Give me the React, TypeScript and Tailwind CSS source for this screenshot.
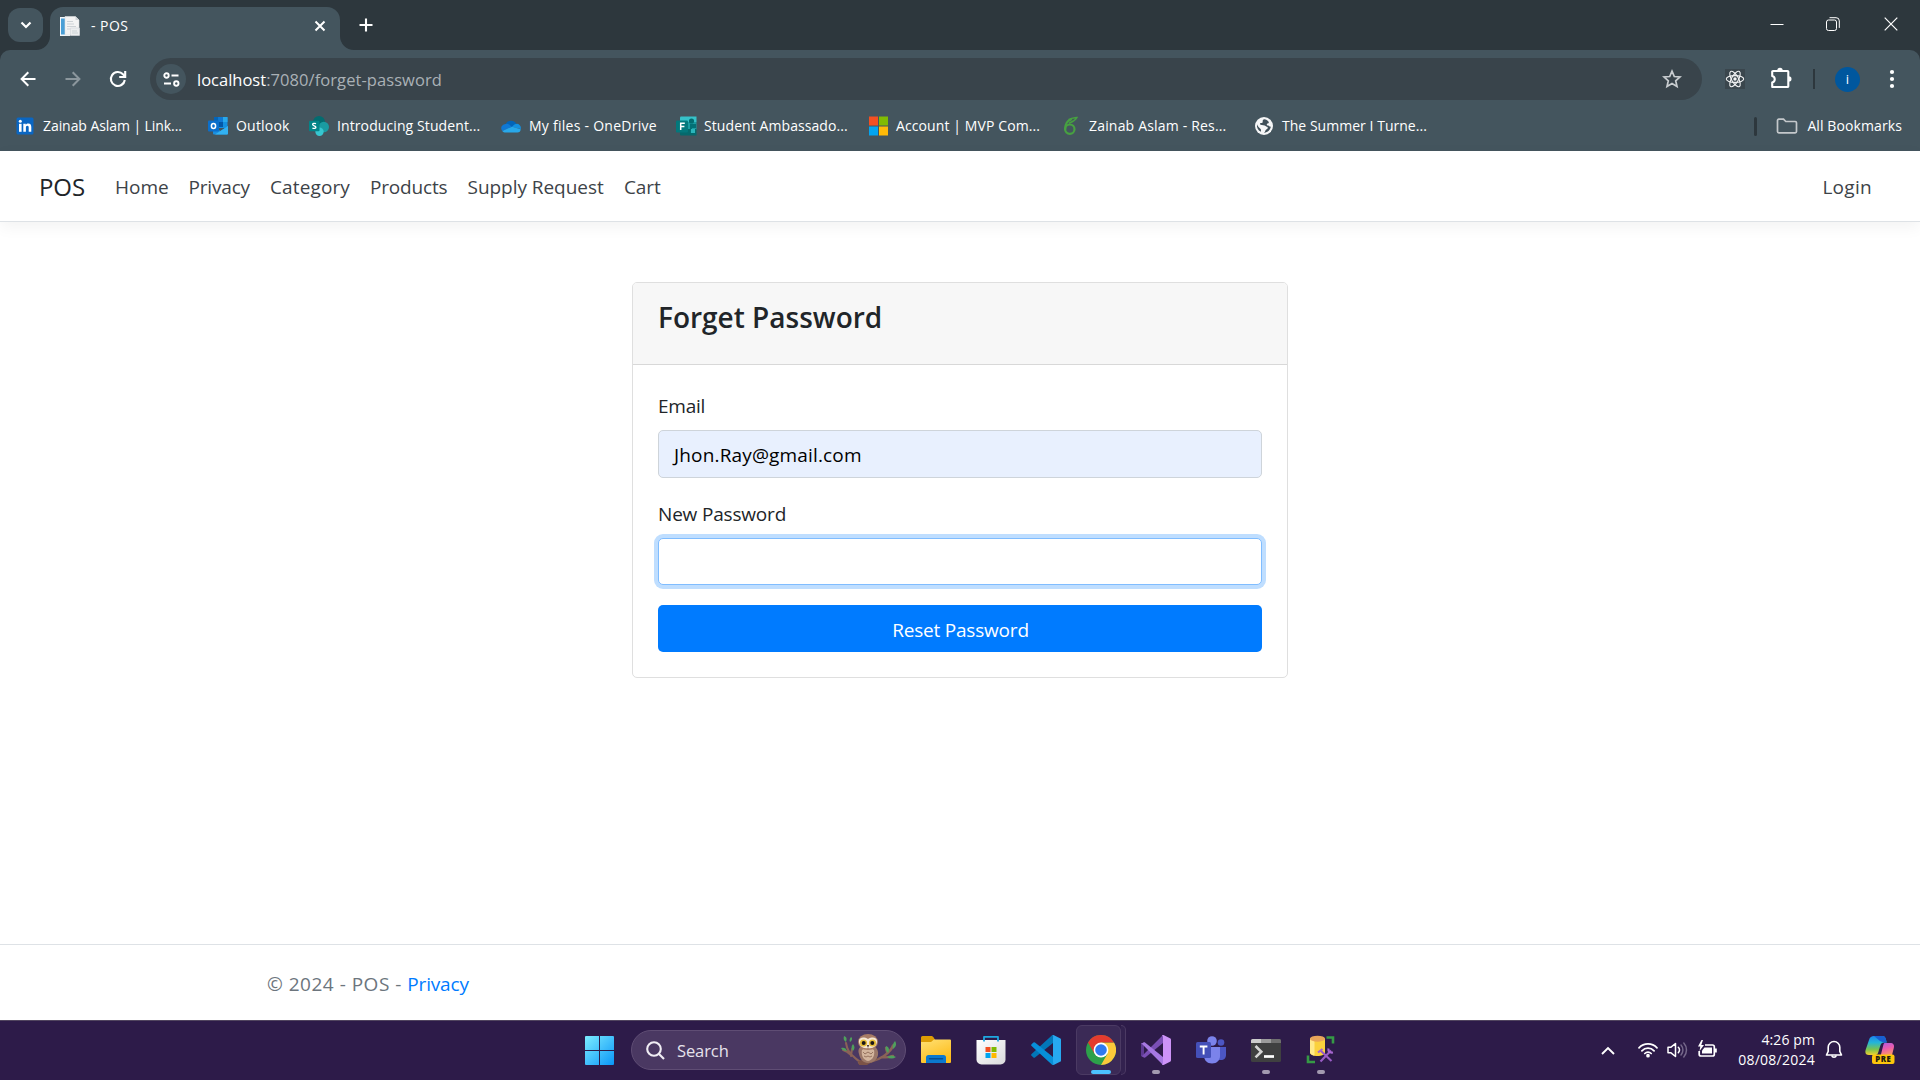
import type { ReactNode } from "react";

/* ---------- browser chrome icons ---------- */

const PageIcon = () => (
  <svg width="20" height="20" viewBox="0 0 20 20">
    <path d="M0 1h10v19H0z" fill="#f3f7fa" />
    <path d="M1 2.500h4V18.500H1z" fill="#4a9fd6" />
    <path d="M5 0.500h10.500L19 4v15H5z" fill="#f4f4f4" stroke="#dcdfe1" strokeWidth=".6" />
    <path d="M15.500 0.500V4H19z" fill="#cfd4d8" />
    <path d="M7 8h7M7 10.500h9M7 13h3M7 5.500h6" stroke="#cdd2d6" strokeWidth="1" />
    <path d="M10.500 12h9v7.500h-9z" fill="#eceeef" stroke="#d0d4d8" strokeWidth=".6" />
    <path d="M12 15h5M12 17h6" stroke="#c5cacf" strokeWidth=".8" />
  </svg>
);

const LinkedIn = () => (
  <svg width="20" height="20" viewBox="0 0 20 20">
    <rect x="1.500" y="1.500" width="17" height="17" rx="1.500" fill="#0a66c2" />
    <rect x="4" y="7.800" width="2.600" height="8" fill="#fff" />
    <circle cx="5.300" cy="5.200" r="1.500" fill="#fff" />
    <path d="M8.300 7.800h2.500v1.100c.5-.8 1.400-1.300 2.500-1.300 2.300 0 3 1.500 3 3.700v4.500h-2.600v-4c0-1.100-.2-2-1.300-2s-1.500.9-1.500 2v4H8.300z" fill="#fff" />
  </svg>
);

const Outlook = () => (
  <svg width="20" height="20" viewBox="0 0 20 20">
    <rect x="6" y="1" width="13.500" height="11" rx=".8" fill="#1490df" />
    <path d="M6 1h4.500v5H6z" fill="#0364b8" />
    <path d="M10.500 1H15v5h-4.500z" fill="#0f78d4" />
    <path d="M15 1h4.500v5H15z" fill="#28a8ea" />
    <path d="M10.500 6H15v5h-4.500z" fill="#0358a7" />
    <path d="M5 10.500l7.500 4.500L20 10v7.500a1 1 0 0 1-1 1H6a1 1 0 0 1-1-1z" fill="#1a8fe0" />
    <path d="M20 10v7.500a1 1 0 0 1-1 1H7z" fill="#32b1f2" />
    <rect x="0" y="4.500" width="11" height="11" rx="1" fill="#0b6fcb" />
    <ellipse cx="5.500" cy="10" rx="2.100" ry="2.500" fill="none" stroke="#fff" strokeWidth="1.500" />
  </svg>
);

const SharePoint = () => (
  <svg width="20" height="20" viewBox="0 0 20 20">
    <circle cx="10" cy="6" r="6" fill="#036c70" />
    <circle cx="14.800" cy="11" r="5.200" fill="#1a9ba1" />
    <circle cx="10.500" cy="15.700" r="4.200" fill="#37c6d0" />
    <rect x="0" y="4.700" width="10.500" height="10.500" rx="1" fill="#038387" />
    <path d="M7 7.700C5.500 7 3.600 7.200 3.600 8.500c0 1.600 3.300 1 3.300 2.700 0 1.300-2 1.600-3.500.8" fill="none" stroke="#fff" strokeWidth="1.300" />
  </svg>
);

const OneDrive = () => (
  <svg width="20" height="20" viewBox="0 0 20 20">
    <path d="M4.500 8.200A6 6 0 0 1 15.300 8L12 12.500z" fill="#0364b8" />
    <path d="M4.500 7.900a4.300 4.300 0 0 0-3.300 7l9.800-4-2.500-2.100a5 5 0 0 0-4-.9z" fill="#0f78d4" />
    <path d="M15 7.900a4.200 4.200 0 0 1 4.800 5.100L11 11c1-1.700 2.400-3 4-3.100z" fill="#1490df" />
    <path d="M1.300 15l9.800-4.300 8.600 2.500c0 2-1.500 3.300-3.200 3.300H4.600c-1.400 0-2.500-.5-3.300-1.500z" fill="#28a8ea" />
  </svg>
);

const Forms = () => (
  <svg width="21" height="20" viewBox="0 0 21 20">
    <path d="M4 1.500A1 1 0 0 1 5 .5h15.500V6H4z" fill="#36c2c9" />
    <path d="M4 6h16.500v8H4z" fill="#1a9ba1" />
    <path d="M4 13h16.500v6.500H5a1 1 0 0 1-1-1z" fill="#05696c" />
    <circle cx="15.500" cy="5" r="2.600" fill="#036c70" />
    <path d="M14 8h6v4h-4v5h-2z" fill="#037075" />
    <rect x="15" y="13" width="4" height="4" fill="#2bb5bb" />
    <rect x="0" y="4.500" width="12" height="12" rx="1" fill="#03787c" />
    <path d="M4.700 14V7.300h4.100M4.700 10.600h3.700" fill="none" stroke="#fff" strokeWidth="1.500" />
  </svg>
);

const Microsoft = () => (
  <svg width="20" height="20" viewBox="0 0 20 20">
    <path d="M1 .5h9v9H1z" fill="#f35022" />
    <path d="M11 .5h9v9h-9z" fill="#80bb03" />
    <path d="M1 10.500h9v9H1z" fill="#03a5f0" />
    <path d="M11 10.500h9v9h-9z" fill="#ffba08" />
  </svg>
);

const Overleaf = () => (
  <svg width="20" height="20" viewBox="0 0 20 20" fill="none" stroke="#47a141" strokeWidth="2.200" strokeLinecap="round">
    <circle cx="8.800" cy="13.200" r="4.700" />
    <path d="M4.200 13C4 8 6 5 10 3.500" />
    <path d="M8 3.500C11 1.800 13 2 15.800 1.600 14.500 4 12 5.500 8.500 7" strokeWidth="1.500" />
  </svg>
);

const Globe = () => (
  <svg width="20" height="20" viewBox="0 0 20 20">
    <circle cx="10" cy="10" r="9" fill="#f5f6f7" />
    <path d="M10.500 3.200c-1.700.3-2 1.300-1.800 2.300.3 1-.7 1.500-1.800 1.600-1.200.2-1.200 1.300-.3 1.700 1.500.7 4 .1 5 1.300.5.8 2.200.6 2.200 1.700 0 1.500-2.300 1.700-2.600 3.200-.2 1-1 1.700-2 1.600 4 .7 7.300-2.400 7.600-6-1.200.3-1.600-.7-2.600-1-1.200-.2-1.700-.8-1.300-1.600.4-.9 1.600-.4 1.900-1.300.3-1.200-1.800-3.300-4.300-3.500zM3 8.200c-.5 3 .8 6 4 7.600-.1-1.300.2-2-.4-2.800C5.300 11.600 3.700 10.500 3 8.200z" fill="#3f4f58" />
  </svg>
);

const ReactAtom = () => (
  <svg width="20" height="20" viewBox="0 0 20 20" className="bg-[#3a464d]">
    <g fill="none" stroke="#f2f3f4" strokeWidth="1.100">
      <ellipse cx="10" cy="10" rx="8.700" ry="3.400" />
      <ellipse cx="10" cy="10" rx="8.700" ry="3.400" transform="rotate(60 10 10)" />
      <ellipse cx="10" cy="10" rx="8.700" ry="3.400" transform="rotate(120 10 10)" />
    </g>
    <circle cx="10" cy="10" r="1.700" fill="#f2f3f4" />
  </svg>
);

const Puzzle = () => (
  <svg width="24" height="24" viewBox="0 0 24 24">
    <path d="M4 5h14.500a.8.8 0 0 1 .8.800V20.200a.8.800 0 0 1-.8.800H3.200v-4.600c3.400-.9 3.400-5.600 0-6.500V5.800A.8.800 0 0 1 4 5z" fill="none" stroke="#fff" strokeWidth="2.100" strokeLinejoin="round" />
    <path d="M8.300 4.500a2.700 2.700 0 0 1 5.400 0zM19.800 10.200a2.700 2.700 0 0 1 0 5.400z" fill="#fff" />
  </svg>
);

/* ---------- taskbar icons ---------- */

const Start = () => (
  <svg width="29" height="29" viewBox="0 0 29 29">
    <defs>
      <linearGradient id="win" x1="0" y1="0" x2="1" y2="1">
        <stop offset="0" stopColor="#7cecff" />
        <stop offset="1" stopColor="#0a96f8" />
      </linearGradient>
    </defs>
    <path d="M1 0h13v14H0V1a1 1 0 0 1 1-1zM15 0h13a1 1 0 0 1 1 1v13H15zM0 15h14v14H1a1 1 0 0 1-1-1zM15 15h14v13a1 1 0 0 1-1 1H15z" fill="url(#win)" />
  </svg>
);

const Owl = () => (
  <svg width="56" height="32" viewBox="0 0 56 32">
    <g fill="none" stroke="#8a6257" strokeWidth="2" strokeLinecap="round">
      <path d="M5 9c1 6 3 10 7 13 3 3 5 5 8 6M2 16c4 1 6 3 8 5M10 22l1-7" />
      <path d="M18 28.500c8 1 18-2 24-6 4-3 8-5 10-11M41 23c5 1 8 0 11-1M46 18l-1-4" strokeWidth="2.400" />
    </g>
    <path d="M17 27c6-2 14-2 21-3l-12 7h-8z" fill="#7b5347" />
    <g fill="#4fa05c">
      <path d="M3 2c3 1 3 3 2 6-2-1-3-3-2-6zM10 3c2 1 1 4-1 5-1-2 0-4 1-5zM0 14c3-1 5 0 6 3-3 0-5-1-6-3zM12 10c2 2 2 5 0 7-2-2-2-5 0-7zM45 12c3 1 4 4 2 7-2-2-3-4-2-7zM54 7c2 3 1 6-2 8-1-3 0-6 2-8zM46 23c3-2 6-2 9 0-3 2-6 2-9 0z" />
    </g>
    <path d="M18 20c-2-6 2-9 9-9s11 4 10 10c-1 5-5 8-10 8s-8-4-9-9z" fill="#9b7868" />
    <path d="M21 16c3-2 9-2 12 0 1 5-1 10-6 11-5-1-7-6-6-11z" fill="#d3b59d" />
    <path d="M22 18l2 2 3-2 3 2 2-2M23 22l2 1 2-1 2 1 2-1" stroke="#97745f" fill="none" />
    <ellipse cx="27" cy="8" rx="10" ry="8" fill="#a77c65" />
    <path d="M18 7c0-3 4-5 9-2 5-3 9-1 9 2 0 5-4 8-9 7-5 1-9-2-9-7z" fill="#f5e7d4" />
    <circle cx="22.500" cy="9" r="3.600" fill="#e6bd38" />
    <circle cx="31.500" cy="9" r="3.600" fill="#e6bd38" />
    <circle cx="22.700" cy="9" r="2" fill="#1c1718" />
    <circle cx="31.300" cy="9" r="2" fill="#1c1718" />
    <path d="M25.800 11h2.400L27 14z" fill="#4c3a35" />
  </svg>
);

const Explorer = () => (
  <svg width="30" height="28" viewBox="0 0 30 28">
    <defs>
      <linearGradient id="fold" x1="0" y1="0" x2=".5" y2="1">
        <stop offset="0" stopColor="#ffe074" />
        <stop offset="1" stopColor="#fdbd1b" />
      </linearGradient>
    </defs>
    <path d="M0 1.500A1.500 1.500 0 0 1 1.500 0H10c1.500 0 2 .5 3 2l1 2v6H0z" fill="#dd9c04" />
    <path d="M0 6h10l3-2.500h16a1 1 0 0 1 1 1V26a1 1 0 0 1-1 1H1a1 1 0 0 1-1-1z" fill="url(#fold)" />
    <path d="M5 27v-5.500a2.500 2.500 0 0 1 2.500-2.500h15a2.500 2.500 0 0 1 2.500 2.500V27z" fill="#0b79cf" />
    <path d="M8.500 22.800h13" stroke="#064f93" strokeWidth="1.500" strokeLinecap="round" />
  </svg>
);

const Store = () => (
  <svg width="30" height="30" viewBox="0 0 30 30">
    <defs>
      <linearGradient id="bag" x1="0" y1="0" x2="1" y2="1">
        <stop offset="0" stopColor="#ffffff" />
        <stop offset="1" stopColor="#d9dadb" />
      </linearGradient>
    </defs>
    <path d="M.5 5h29V24.500a5 5 0 0 1-5 5h-19a5 5 0 0 1-5-5z" fill="url(#bag)" />
    <path d="M8 6.500V1.800h14v4.700" fill="none" stroke="#1fa8e0" strokeWidth="1.800" strokeLinejoin="round" />
    <path d="M9.500 12h5v5h-5z" fill="#f25022" />
    <path d="M15.500 12h5v5h-5z" fill="#7fba00" />
    <path d="M9.500 18h5v5h-5z" fill="#00a4ef" />
    <path d="M15.500 18h5v5h-5z" fill="#ffb900" />
  </svg>
);

const VSCode = () => (
  <svg width="30" height="30" viewBox="0 0 30 30">
    <path d="M22 0v8L4 22.500a1.300 1.300 0 0 1-1.600 0L.6 20.800a1.200 1.200 0 0 1 0-1.800L20.500.7A2 2 0 0 1 22 0z" fill="#0277b8" />
    <path d="M22 30v-8L4 7.500a1.300 1.300 0 0 0-1.600 0L.6 9.200a1.200 1.200 0 0 0 0 1.800l19.900 18.300A2 2 0 0 0 22 30z" fill="#078fd8" />
    <path d="M21.500.2c1 1 .5 1.500.5 2.800v24c0 1.300.5 1.800-.5 2.800.4.200 1 .2 1.500 0l6-3a1.500 1.500 0 0 0 1-1.400V4.600a1.500 1.500 0 0 0-1-1.400l-6-3a2 2 0 0 0-1.500 0z" fill="#27a9f1" />
  </svg>
);

const Chrome = () => (
  <svg width="30" height="30" viewBox="0 0 30 30">
    <circle cx="15" cy="15" r="15" fill="#2da04a" />
    <path d="M28 7.500H15l6.500 11.250L15 30A15 15 0 0 0 28 7.500z" fill="#fcc93a" />
    <path d="M2 7.500A15 15 0 0 1 28 7.500H15L8.500 18.750z" fill="#e33b2e" />
    <circle cx="15" cy="15" r="7.400" fill="#fff" />
    <circle cx="15" cy="15" r="5.800" fill="#2f7af0" />
  </svg>
);

const VisualStudio = () => (
  <svg width="30" height="30" viewBox="0 0 30 30">
    <path d="M0 8.800l3-1.600v15.300L0 21z" fill="#5d3a92" />
    <path d="M22 0v8L4.600 22.300a1.300 1.300 0 0 1-1.600.1L0 20.800c.8.300 1.300 0 1.800-.5z" fill="#7a4fb5" />
    <path d="M3.700 7.300L22 22v8L1.800 9.700C1.300 9.100.6 8.600 0 8.900l3-1.600z" fill="#a678e2" />
    <path d="M21 .2c.8-.3 1.300-.2 2 .1l6 2.900c.6.300 1 .8 1 1.500v20.600c0 .7-.4 1.200-1 1.500l-6 2.900c-.7.300-1.200.4-2 .1.700-.6 1-1 1-2V2.200c0-1-.3-1.400-1-2z" fill="#cd93f8" />
  </svg>
);

const Teams = () => (
  <svg width="30" height="28" viewBox="0 0 30 28">
    <circle cx="25" cy="6.500" r="3.300" fill="#4c56c4" />
    <path d="M22 11h8v8c0 3-2 5-5 5h-3z" fill="#4c56c4" />
    <circle cx="16" cy="5" r="4.800" fill="#7b83eb" />
    <path d="M8 11h16v9c0 4-3 7.500-8 7.500S8 24 8 20z" fill="#7b83eb" />
    <rect x="0" y="6" width="15" height="16" rx="1.500" fill="#4450b8" />
    <path d="M3.800 10.500h7.600M7.600 10.500v8" stroke="#fff" strokeWidth="1.900" />
  </svg>
);

const Terminal = () => (
  <svg width="30" height="23" viewBox="0 0 30 23">
    <rect width="30" height="23" rx="1.500" fill="#3f4040" />
    <path d="M0 4V1.500A1.500 1.500 0 0 1 1.500 0H10v4z" fill="#cccccc" />
    <path d="M10 0h10v4H10z" fill="#9b9b9b" />
    <path d="M20 0h8.500A1.500 1.500 0 0 1 30 1.500V4H20z" fill="#6f6f6f" />
    <path d="M4.500 7l5.800 5.700-5.800 5.700" fill="none" stroke="#d5d5d5" strokeWidth="2.600" />
    <path d="M13 17.500h10" stroke="#fff" strokeWidth="2.700" />
  </svg>
);

const Ssms = () => (
  <svg width="30" height="30" viewBox="0 0 30 30">
    <path d="M20.500 2.500h6.500v6M2 20.500V27h7" fill="none" stroke="#359a45" strokeWidth="2.600" />
    <path d="M4 3.500v14c0 2 3.500 3.500 7.500 3.500s7.500-1.500 7.500-3.500v-14z" fill="#fbd13d" />
    <path d="M4 3.500v14c0 1.500 2 2.700 4.500 3.200V3.500z" fill="#ffe98b" />
    <ellipse cx="11.500" cy="3.700" rx="7.500" ry="3" fill="#e9a55a" />
    <path d="M14.500 15.500l11 10.500M25 15.500L14.500 26.500" stroke="#9a5cc6" strokeWidth="2.100" />
    <path d="M12 17.500l4.500-3.500M22.500 13.500c-.5 3 1 4.500 4.500 4" stroke="#a566cf" strokeWidth="2.200" fill="none" />
  </svg>
);

const Copilot = () => (
  <svg width="32" height="30" viewBox="0 0 32 30">
    <defs>
      <linearGradient id="cpa" x1="0" y1="0" x2="0" y2="1">
        <stop offset="0" stopColor="#1c86ee" />
        <stop offset=".35" stopColor="#24b5d8" />
        <stop offset=".7" stopColor="#79c34f" />
        <stop offset="1" stopColor="#f3cf31" />
      </linearGradient>
      <linearGradient id="cpb" x1="0" y1="0" x2=".3" y2="1">
        <stop offset="0" stopColor="#a65ae6" />
        <stop offset=".5" stopColor="#ea5cae" />
        <stop offset="1" stopColor="#ff9a62" />
      </linearGradient>
    </defs>
    <path d="M9 1h8.500c2 0 2.700 1 3.300 3l.9 3.500h-2.500c-2.200 0-3.300 1-4 3.500l-2 6.500c-.6 2-1.600 2.500-3.500 2.500H4c-3 0-4.200-2-3.400-5L4 5C4.900 2 6.500 1 9 1z" fill="url(#cpa)" />
    <path d="M9 1h8.500c2 0 2.700 1 3.300 3l.9 3.500h-3L15 6z" fill="#185fd0" />
    <path d="M19.500 8H25c3.500 0 4.600 2 3.800 5L26.500 22H13c2 0 2.700-1.500 3.200-3.500l2-8c.3-1.300.5-2 1.300-2.500z" fill="url(#cpb)" />
    <rect x="7" y="19.500" width="22.500" height="9.500" rx="2" fill="#fdc50c" />
    <text x="18.300" y="27.200" textAnchor="middle" fontFamily="Open Sans, sans-serif" fontSize="7.800" fontWeight="800" letterSpacing=".6" fill="#201a10">PRE</text>
  </svg>
);

/* ---------- data ---------- */

const bookmarks: { icon: ReactNode; label: string; cls: string }[] = [
  { icon: <LinkedIn />, label: "Zainab Aslam | Link...", cls: "w-[193px] tracking-[-0.07px]" },
  { icon: <Outlook />, label: "Outlook", cls: "w-[101px] tracking-[0.2px]" },
  { icon: <SharePoint />, label: "Introducing Student...", cls: "w-[192px] tracking-[0.1px]" },
  { icon: <OneDrive />, label: "My files - OneDrive", cls: "w-[175px] tracking-[0.26px]" },
  { icon: <Forms />, label: "Student Ambassado...", cls: "w-[192px] tracking-[0.08px]" },
  { icon: <Microsoft />, label: "Account | MVP Com...", cls: "w-[193px] tracking-[0.1px]" },
  { icon: <Overleaf />, label: "Zainab Aslam - Res...", cls: "w-[193px] tracking-[0.18px]" },
  { icon: <Globe />, label: "The Summer I Turne...", cls: "w-[193px] tracking-[0.03px]" },
];

const navLinks = [
  { label: "Home", cls: "w-[73.5px]" },
  { label: "Privacy", cls: "w-[81.5px] tracking-[-0.17px]" },
  { label: "Category", cls: "w-[100px] tracking-[0.12px]" },
  { label: "Products", cls: "w-[97.5px] tracking-[-0.17px]" },
  { label: "Supply Request", cls: "w-[156.5px] tracking-[-0.04px]" },
  { label: "Cart", cls: "w-[57px] tracking-[-0.1px]" },
];

/* ---------- sections ---------- */

const TabStrip = () => (
  <div className="flex h-[50px] items-end bg-[#2d373d]">
    <div className="mb-2 ml-2 flex h-[34px] w-[35px] items-center justify-center rounded-xl bg-[#44555e]">
      <svg width="12" height="8" viewBox="0 0 12 8" fill="none" stroke="#fff" strokeWidth="2.200">
        <path d="M1.500 1.500L6 6l4.500-4.500" />
      </svg>
    </div>
    <svg width="14" height="14" viewBox="0 0 14 14" className="-ml-[7px]">
      <path d="M14 0v14H0A14 14 0 0 0 14 0z" fill="#44555e" />
    </svg>
    <div className="flex h-[43px] w-[290px] items-center rounded-t-[13px] bg-[#44555e] pb-[6px] pl-[10px] pr-[14px]">
      <PageIcon />
      <span className="ml-[11px] flex-1 text-[14px] leading-5 tracking-[0.45px] text-white">- POS</span>
      <svg width="12" height="12" viewBox="0 0 12 12" stroke="#fff" strokeWidth="2">
        <path d="M1.500 1.500l9 9M10.500 1.500l-9 9" />
      </svg>
    </div>
    <svg width="14" height="14" viewBox="0 0 14 14">
      <path d="M0 0v14h14A14 14 0 0 1 0 0z" fill="#44555e" />
    </svg>
    <svg width="14" height="14" viewBox="0 0 14 14" className="mb-[18px] ml-[5px]" stroke="#fff" strokeWidth="2.100">
      <path d="M7 .5v13M.5 7h13" />
    </svg>
    <div className="ml-auto mr-[22px] flex h-[50px] items-center pb-[2px]">
      <svg width="14" height="14" viewBox="0 0 14 14" stroke="#fff" strokeWidth="1">
        <path d="M.5 7.500h13" />
      </svg>
      <svg width="14" height="14" viewBox="0 0 14 14" className="ml-[42px]" fill="none" stroke="#fff">
        <rect x="0.500" y="3" width="10" height="10.500" rx="2" />
        <path d="M3.500 .700h6.500a3.200 3.200 0 0 1 3.300 3.200v7" />
      </svg>
      <svg width="14" height="14" viewBox="0 0 14 14" className="ml-11" stroke="#fff" strokeWidth="1.200">
        <path d="M.7 .7l12.600 12.600M13.300 .7L.7 13.300" />
      </svg>
    </div>
  </div>
);

const Toolbar = () => (
  <div className="bg-[#2d373d]">
    <div className="flex h-[58px] items-center rounded-t-[10px] bg-[#44555e] pl-[19.500px]">
      <svg width="16" height="16" viewBox="0 0 16 16" fill="none" stroke="#fff" strokeWidth="2">
        <path d="M15.500 8H2M8.300 1.300L1.600 8l6.700 6.700" />
      </svg>
      <svg width="16" height="16" viewBox="0 0 16 16" className="ml-[29px]" fill="none" stroke="#8c979d" strokeWidth="2">
        <path d="M.5 8H14M7.700 1.300L14.400 8l-6.700 6.700" />
      </svg>
      <svg width="18" height="18" viewBox="0 0 18 18" className="ml-7" fill="none" stroke="#fff" strokeWidth="2.100">
        <path d="M15.800 10A7 7 0 1 1 14 4.200L16 6.200" />
        <path d="M16.200 1v6h-6" />
      </svg>
      <div className="ml-[23.500px] flex h-[42px] w-[1552px] items-center rounded-full bg-[#39444b]">
        <div className="ml-[6px] flex size-[30px] items-center justify-center rounded-full bg-[#44555e]">
          <svg width="17" height="15" viewBox="0 0 17 15" fill="none" stroke="#fff" strokeWidth="1.900">
            <circle cx="3.500" cy="3.500" r="2.200" />
            <path d="M8.500 3.500h7M1 11.500h7" />
            <circle cx="13.300" cy="11.500" r="2.200" />
          </svg>
        </div>
        <div className="ml-[11px] flex-1 pt-px text-[16.500px] leading-6 text-[#aab1b6]">
          <span className="text-white">localhost</span>
          <span className="tracking-[0.07px]">:7080/forget-password</span>
        </div>
        <svg width="20" height="20" viewBox="0 0 20 20" className="mr-5" fill="none" stroke="#c9cdd0" strokeWidth="1.700">
          <path d="M10 2.200l2.300 5.300 5.700.5-4.300 3.800 1.300 5.600-5-3-5 3 1.300-5.600L2 8l5.700-.5z" />
        </svg>
      </div>
      <div className="ml-[23px]"><ReactAtom /></div>
      <div className="-mt-0.5 ml-[24px]"><Puzzle /></div>
      <div className="ml-5 h-5 w-[2px] bg-[#2d373d]" />
      <div className="ml-5 flex size-[25px] items-center justify-center rounded-full bg-[#00579e] text-[13px] leading-none text-white">i</div>
      <svg width="6" height="20" viewBox="0 0 6 20" className="ml-[29px]" fill="#fff">
        <circle cx="3" cy="3" r="2.100" />
        <circle cx="3" cy="10" r="2.100" />
        <circle cx="3" cy="17" r="2.100" />
      </svg>
    </div>
  </div>
);

const BookmarksBar = () => (
  <div className="flex h-[43px] items-center bg-[#44555e] pb-[7px] pl-[15px] text-[14px] leading-5 text-white">
    {bookmarks.map((b) => (
      <div key={b.label} className={`flex shrink-0 items-center gap-2 whitespace-nowrap ${b.cls}`}>
        <div className="w-5">{b.icon}</div>
        <span>{b.label}</span>
      </div>
    ))}
    <div className="ml-auto mr-[18px] flex items-center">
      <div className="h-[19px] w-[3px] rounded-full bg-[#2d373d]" />
      <svg width="22" height="16" viewBox="0 0 22 16" className="ml-[19px]" fill="none" stroke="#c4c8cb" strokeWidth="1.700">
        <path d="M1.500 2.500A1.300 1.300 0 0 1 2.800 1.200H7.500l2.300 2.300h9.400a1.300 1.300 0 0 1 1.300 1.300v8.700a1.300 1.300 0 0 1-1.300 1.300H2.800a1.300 1.300 0 0 1-1.300-1.300z" />
      </svg>
      <span className="ml-[9px] tracking-[0.1px]">All Bookmarks</span>
    </div>
  </div>
);

const SiteNav = () => (
  <nav className="flex h-[71px] items-center border-b border-[#dee2e6] pl-[39px] pr-12 pt-[2px] text-[19px] leading-[30px] text-[#3d4348] shadow-[0_5px_15px_rgba(0,0,0,0.05)]">
    <a className="w-[76px] text-[24px] tracking-[-0.1px] text-[#212529]">POS</a>
    {navLinks.map((l) => (
      <a key={l.label} className={`shrink-0 whitespace-nowrap ${l.cls}`}>{l.label}</a>
    ))}
    <a className="ml-auto tracking-[0.3px]">Login</a>
  </nav>
);

const ForgetPasswordCard = () => (
  <div className="mx-auto mt-[60px] h-[396px] w-[656px] rounded-[5px] border border-[#dfdfdf] bg-white text-[19px] leading-[30px] text-[#212529]">
    <div className="h-[82px] rounded-t-[4px] border-b border-[#d8d8d8] bg-[#f7f7f7] px-[25px] pt-4">
      <h4 className="text-[28px] font-semibold leading-9">Forget Password</h4>
    </div>
    <div className="flex flex-col px-[25px] pt-[26px]">
      <label className="tracking-[-0.25px]">Email</label>
      <div className="mt-[9px] flex h-12 items-center rounded-[5px] border border-[#ced4da] bg-[#e8f0fe] px-[15px] pt-[2px] tracking-[0.16px] text-black">
        Jhon.Ray@gmail.com
      </div>
      <label className="mt-[21px] tracking-[-0.18px]">New Password</label>
      <div className="mt-[9px] h-[47px] rounded-[5px] border border-[#80bdff] bg-white shadow-[0_0_0_4px_#bfdeff]" />
      <button className="mt-5 h-[47px] rounded-[5px] bg-[#007bff] pl-px pt-[2px] text-center tracking-[-0.2px] text-white">Reset Password</button>
    </div>
  </div>
);

const TaskButton = ({ children, running = false }: { children: ReactNode; running?: boolean }) => (
  <div className="flex h-full w-[55px] flex-col items-center">
    <div className="mt-[14px] flex h-[30px] items-center justify-center">{children}</div>
    {running && <div className="mt-[5px] h-1 w-2 rounded-full bg-[#a39ab0]" />}
  </div>
);

const Taskbar = () => (
  <div className="flex h-[60px] border-t border-[#51455f] bg-[#2d1b49] text-white">
    <div className="ml-[585px] mt-[15px]"><Start /></div>
    <div className="ml-[17px] mt-[9px] flex h-10 w-[275px] items-center rounded-full border border-[#5f4d74] bg-[#4a3862] pl-[14px]">
      <svg width="19" height="19" viewBox="0 0 19 19" fill="none" stroke="#f0edf4" strokeWidth="2.100">
        <circle cx="8" cy="8" r="6.800" />
        <path d="M13 13l5 5" />
      </svg>
      <span className="ml-3 pt-px text-[16.500px] leading-6 tracking-[-0.1px] text-[#e6e2ec]">Search</span>
      <div className="ml-auto mr-2"><Owl /></div>
    </div>
    <div className="ml-[2px] flex">
      <TaskButton><Explorer /></TaskButton>
      <TaskButton><Store /></TaskButton>
      <TaskButton><VSCode /></TaskButton>
      <div className="flex h-full w-[55px] pl-[3px]">
        <div className="mt-1 flex h-[50px] w-[45px] flex-col items-center rounded-[6px] border border-[#4b3a63] bg-[#3b2a56] pl-[5px] pt-[9px]">
          <Chrome />
          <div className="mt-[5px] h-1 w-5 shrink-0 rounded-full bg-[#4cc2ff]" />
        </div>
        <div className="mt-1 h-[50px] w-[5px] rounded-r-[6px] border border-l-0 border-[#4b3a63] bg-[#33224f]" />
      </div>
      <TaskButton running><VisualStudio /></TaskButton>
      <TaskButton><Teams /></TaskButton>
      <TaskButton running><Terminal /></TaskButton>
      <TaskButton running><Ssms /></TaskButton>
    </div>
    <div className="ml-auto flex items-center pb-px">
      <svg width="14" height="9" viewBox="0 0 14 9" className="mr-[23px]" fill="none" stroke="#fff" strokeWidth="1.900">
        <path d="M1 8l6-6 6 6" />
      </svg>
      <svg width="20" height="16" viewBox="0 0 20 16" fill="none" stroke="#fff" strokeWidth="1.700" strokeLinecap="round">
        <path d="M1 5.800a12.500 12.500 0 0 1 18 0M3.900 8.800a8.500 8.500 0 0 1 12.200 0M6.800 11.500a4.500 4.500 0 0 1 6.400 0" />
        <circle cx="10" cy="13.700" r="1" fill="#fff" />
      </svg>
      <svg width="21" height="18" viewBox="0 0 21 18" className="ml-[9px]" fill="none" stroke="#fff" strokeWidth="1.500" strokeLinecap="round">
        <path d="M1 6.200h3L8.500 2.500v13L4 11.800H1z" strokeLinejoin="round" />
        <path d="M11.300 6.300a4 4 0 0 1 0 5.400" />
        <path d="M14 4a7.500 7.500 0 0 1 0 10M16.800 2a10.500 10.500 0 0 1 0 14" stroke="#75688a" />
      </svg>
      <svg width="21" height="18" viewBox="0 0 21 18" className="-mt-[3px] ml-[9px]" fill="none" stroke="#fff" strokeWidth="1.700">
        <path d="M8 5h7.500A1.800 1.800 0 0 1 17.300 6.800v7.400a1.800 1.800 0 0 1-1.800 1.800H4a1.800 1.800 0 0 1-1.800-1.800V11" />
        <path d="M7.500 7.500H15v6H5v-3z" fill="#fff" stroke="none" />
        <path d="M18.800 8.500v4" strokeWidth="2" />
        <path d="M4.500 0L1 6.500h2.300L2.500 11l4.500-6H4.300L6 0z" fill="#fff" stroke="none" />
      </svg>
      <div className="ml-[18px] w-[79px] text-right text-[14px] leading-5">
        <div className="tracking-[0.1px]">4:26 pm</div>
        <div className="tracking-[0.25px]">08/08/2024</div>
      </div>
      <svg width="18" height="20" viewBox="0 0 18 20" className="ml-[10px]" fill="none" stroke="#fff" strokeWidth="1.600" strokeLinejoin="round">
        <path d="M9 1.500a5.800 5.800 0 0 0-5.800 5.800v4L1.500 15h15l-1.700-3.700v-4A5.800 5.800 0 0 0 9 1.500z" />
        <path d="M6.700 15.500a2.400 2.400 0 0 0 4.600 0" />
      </svg>
      <div className="ml-[22px] mr-[23px]"><Copilot /></div>
    </div>
  </div>
);

export default function App() {
  return (
    <div className="flex h-[1080px] w-[1920px] flex-col overflow-hidden bg-white font-['Open_Sans',sans-serif]">
      <TabStrip />
      <Toolbar />
      <BookmarksBar />
      <SiteNav />
      <main className="flex-1">
        <ForgetPasswordCard />
      </main>
      <footer className="flex h-[76px] items-center border-t border-[#dee2e6] pl-[267px] pt-[2px] text-[19px] leading-[30px] text-[#6c757d]">
        <span className="whitespace-pre tracking-[0.5px]">© 2024 - POS - </span>
        <a className="tracking-[-0.17px] text-[#007bff]">Privacy</a>
      </footer>
      <Taskbar />
    </div>
  );
}
